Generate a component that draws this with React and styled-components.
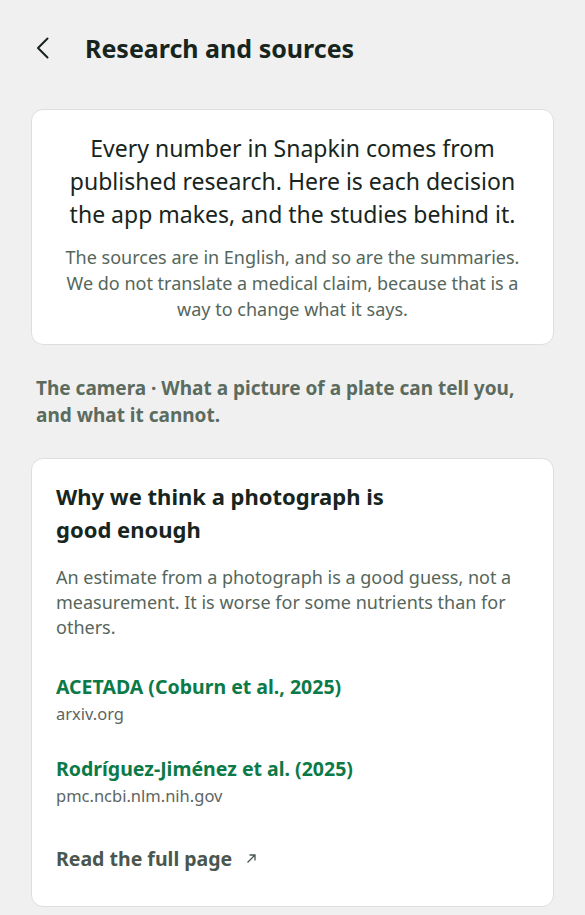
import styled, { createGlobalStyle } from "styled-components";

const GlobalStyle = createGlobalStyle`
  html, body {
    margin: 0;
    padding: 0;
    background: #eff0ef;
  }
  body {
    font-family: "Noto Sans", "Open Sans", sans-serif;
    color: #17251d;
  }
`;

const sources = [
  { title: "ACETADA (Coburn et al., 2025)", host: "arxiv.org" },
  { title: "Rodríguez-Jiménez et al. (2025)", host: "pmc.ncbi.nlm.nih.gov" },
];

const App = () => {
  return (
    <>
      <GlobalStyle />
      <Page>
        <Header>
          <BackButton aria-label="Back">
            <svg width="14" height="22" viewBox="0 0 14 22" fill="none">
              <path
                d="M11.5 1.5 L2 11 L11.5 20.5"
                stroke="#17251d"
                strokeWidth="2"
                strokeLinecap="round"
                strokeLinejoin="round"
              />
            </svg>
          </BackButton>
          <Title>Research and sources</Title>
        </Header>

        <Card $center>
          <Lead>
            Every number in Snapkin comes from published research. Here is
            each decision the app makes, and the studies behind it.
          </Lead>
          <Note>
            The sources are in English, and so are the summaries. We do not
            translate a medical claim, because that is a way to change what it
            says.
          </Note>
        </Card>

        <SectionLabel>
          The camera · What a picture of a plate can tell you, and what it
          cannot.
        </SectionLabel>

        <Card>
          <CardTitle>Why we think a photograph is good enough</CardTitle>
          <Body>
            An estimate from a photograph is a good guess, not a measurement.
            It is worse for some nutrients than for others.
          </Body>
          <SourceList>
            {sources.map((s) => (
              <Source key={s.title}>
                <SourceTitle>{s.title}</SourceTitle>
                <SourceHost>{s.host}</SourceHost>
              </Source>
            ))}
          </SourceList>
          <ReadMore>
            Read the full page
            <svg width="11" height="11" viewBox="0 0 11 11" fill="none">
              <path
                d="M1.5 9.5 L9 2 M3.5 2 H9 V7.5"
                stroke="#4a564e"
                strokeWidth="1.3"
              />
            </svg>
          </ReadMore>
        </Card>
      </Page>
    </>
  );
};

export default App;

const Page = styled.div`
  padding: 0 31px 24px 31px;
  display: flex;
  flex-direction: column;
`;

const Header = styled.div`
  display: flex;
  align-items: center;
  height: 95px;
  margin-left: 4px;
`;

const BackButton = styled.button`
  display: flex;
  align-items: center;
  justify-content: center;
  background: none;
  border: none;
  padding: 0;
  width: 16px;
  margin-right: 34px;
  cursor: pointer;
`;

const Title = styled.h1`
  margin: 0;
  font-size: 25px;
  font-weight: 700;
  color: #17251d;
`;

const Card = styled.div`
  background: #ffffff;
  border: 1px solid #dcdfdc;
  border-radius: 12px;
  padding: ${({ $center }) => ($center ? "22px 29px 22px" : "21px 24px 34px")};
  text-align: ${({ $center }) => ($center ? "center" : "left")};
  margin-top: 14px;
`;

const Lead = styled.p`
  margin: 0;
  font-size: 23px;
  line-height: 33px;
  color: #17251d;
`;

const Note = styled.p`
  margin: 13px 0 0;
  font-size: 18px;
  line-height: 26px;
  color: #55665b;
`;

const SectionLabel = styled.h2`
  margin: 30px 0 15px 5px;
  font-size: 19px;
  line-height: 27px;
  font-weight: 700;
  color: #5b6b60;
`;

const CardTitle = styled.h3`
  margin: 0;
  max-width: 360px;
  font-size: 22px;
  line-height: 33px;
  font-weight: 700;
  color: #17251d;
`;

const Body = styled.p`
  margin: 19px 0 0;
  font-size: 18px;
  line-height: 25px;
  color: #55665b;
`;

const SourceList = styled.div`
  display: flex;
  flex-direction: column;
  gap: 28px;
  margin-top: 33px;
`;

const Source = styled.div`
  display: flex;
  flex-direction: column;
`;

const SourceTitle = styled.a`
  font-size: 19.5px;
  line-height: 27px;
  font-weight: 700;
  color: #0b7a48;
  text-decoration: none;
`;

const SourceHost = styled.span`
  font-size: 16.5px;
  line-height: 27px;
  color: #5d655f;
`;

const ReadMore = styled.a`
  display: flex;
  align-items: center;
  gap: 14px;
  margin-top: 36px;
  font-size: 19.5px;
  line-height: 27px;
  font-weight: 700;
  color: #4a564e;
  text-decoration: none;
`;
